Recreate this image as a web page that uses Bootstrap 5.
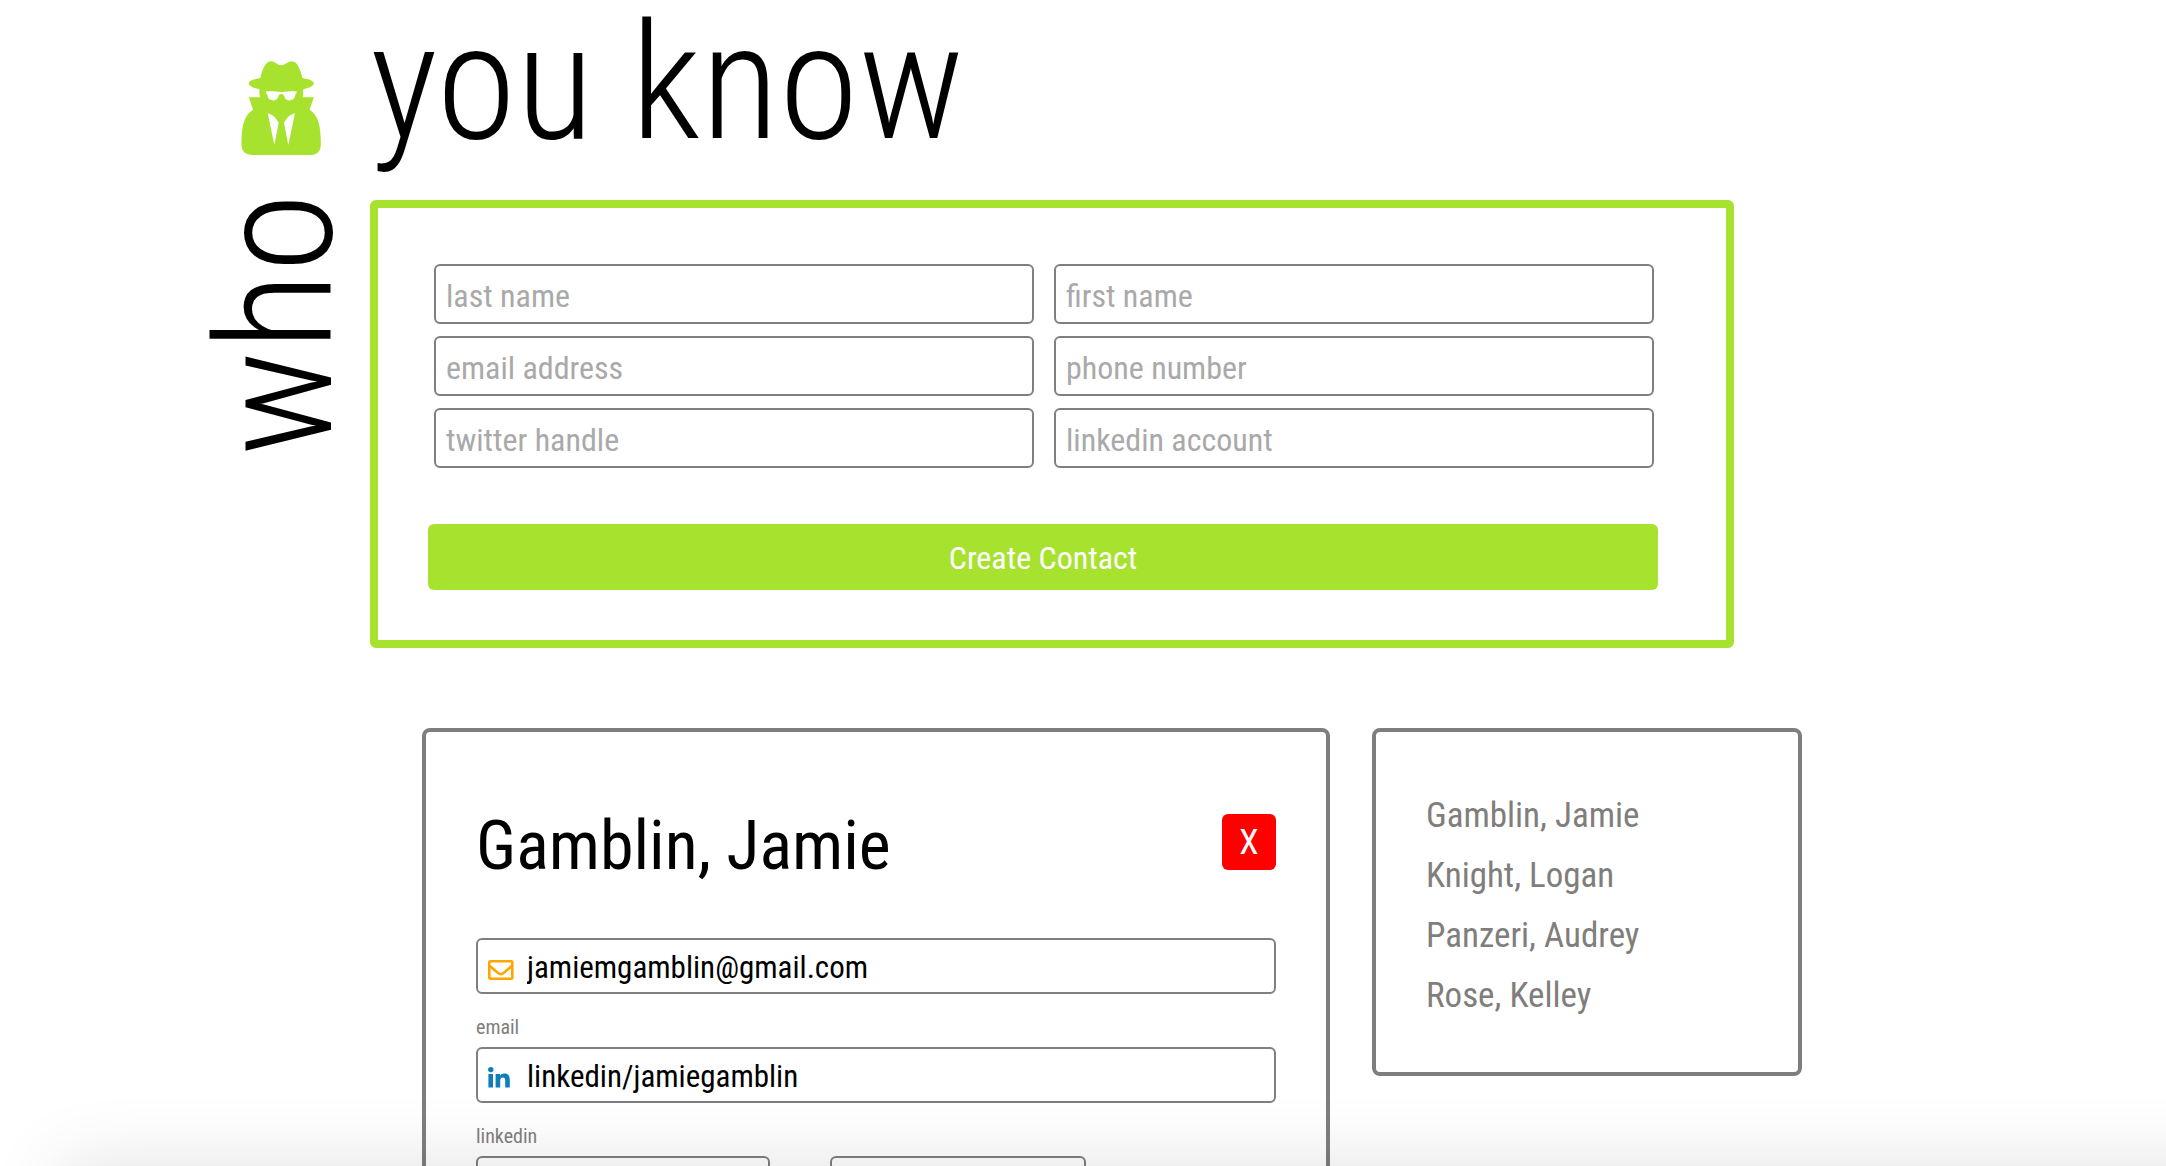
<!DOCTYPE html>
<html lang="en">
<head>
<meta charset="utf-8">
<meta name="viewport" content="width=device-width, initial-scale=1">
<title>who you know</title>
<link href="https://cdn.jsdelivr.net/npm/bootstrap@5.3.0/dist/css/bootstrap.min.css" rel="stylesheet">
<style>
  :root { --lime: #a6e22e; --stone: #7f7e7c; }
  body { font-family: "Roboto Condensed", "Liberation Sans", sans-serif; font-size: 32px; color: #000; background: #fff; }
  .page { padding: 0 364px 48px 213px; }
  .rail { width: 157px; padding: 61px 0 0; }
  .spy { width: 80px; height: 94px; margin-left: 28px; color: var(--lime); }
  .display-word { font-size: 162px; line-height: 166px; font-weight: 300; }
  .display-side { writing-mode: vertical-rl; transform: rotate(180deg); line-height: 126px; margin-top: 38px; }
  .create-box { border: 8px solid var(--lime); border-radius: 6px; padding: 56px 68px 50px 50px; margin: 34px 68px 80px 0; }
  .create-fields { display: grid; grid-template-columns: 1fr 1fr; gap: 12px 20px; padding: 0 4px 0 6px; margin-bottom: 56px; }
  .create-fields .form-control { height: 60px; padding: 4px 10px 0; }
  .form-control { font-size: 32px; line-height: 40px; border: 2px solid #7f7f7f; border-radius: 6px; color: #000; }
  .form-control::placeholder { color: #a9a9a9; }
  .btn-create { height: 66px; padding: 2px 0 0; font-size: 32px; line-height: 40px; color: #fff; background: var(--lime); border: 0; border-radius: 6px; }
  .btn-create:hover { color: #fff; background: #97d022; }
  .details { display: grid; grid-template-columns: 908fr 430fr; gap: 42px; padding-left: 52px; }
  .panel { border: 4px solid var(--stone); border-radius: 8px; min-width: 0; }
  .contact-panel { padding: 70px 50px 50px; }
  .list-panel { padding: 54px 50px 46px; }
  .contact-name { font-size: 68px; line-height: 72px; font-weight: 400; padding-top: 8px; }
  .contact-head { margin-bottom: 56px; }
  .btn-remove { width: 54px; height: 56px; padding: 2px 0 0; font-size: 35px; line-height: 40px; color: #fff; background: #f00; border: 0; border-radius: 6px; }
  .btn-remove:hover { color: #fff; background: #d00; }
  .field-box { display: flex; align-items: center; height: 56px; padding: 4px 0 0 10px; border: 2px solid #7f7f7f; border-radius: 6px; }
  .field-box svg { width: 26px; height: 26px; flex: none; margin-right: 13px; }
  .field-box input { flex: 1; min-width: 0; padding: 0; border: 0; background: transparent; color: #000; font-size: 31px; line-height: 40px; }
  .field-label { display: block; font-size: 20px; line-height: 26px; color: var(--stone); padding: 20px 0 7px; }
  .short-fields { gap: 7.5%; }
  .short-a { width: 36.75%; }
  .short-b { width: 32%; }
  .name-link { display: block; font-size: 35px; line-height: 60px; color: var(--stone); text-decoration: none; }
  .name-link:hover { color: #000; }
  .bottom-shade { position: fixed; top: 100%; left: 60px; right: -200px; height: 300px; box-shadow: 0 0 70px rgba(0,0,0,.12); pointer-events: none; }
</style>
</head>
<body>
<div class="page d-flex">
  <div class="rail flex-shrink-0">
    <svg class="spy d-block" viewBox="48 47 240 283" fill="currentColor" aria-hidden="true">
      <path fill-rule="evenodd" d="M138 48 C151 49 157 60 169 60 C181 60 187 49 200 48 C217 47 228 76 232 98 C252 101 267 107 267 114 C267 122 253 128 235 132 C235 141 235 148 233 156 L267 156 L254 194 C280 209 288 244 288 296 C288 320 276 330 254 330 L84 330 C61 330 49 319 49 296 C49 244 57 209 84 194 L71 156 L105 156 C103 148 103 141 103 132 C86 129 71 122 71 114 C71 107 86 101 106 98 C110 76 122 47 138 48 Z
      M122 139 C135 136 154 140 169 140 C184 140 203 136 216 139 L214 145 C211 147 211 150 210 154 C206 169 182 170 178 154 C176 148 175 146 169 146 C163 146 162 148 160 154 C156 170 132 169 128 154 C127 149 127 147 124 145 Z
      M128 204 L148 300 L161 233 C151 215 142 208 128 204 Z M210 204 L190 300 L177 233 C187 215 196 208 210 204 Z"/>
    </svg>
    <div class="display-word display-side">who</div>
  </div>

  <main class="flex-grow-1">
    <h1 class="display-word m-0 text-nowrap">you know</h1>

    <form class="create-box">
      <div class="create-fields">
        <input class="form-control" type="text" aria-label="last name" placeholder="last name">
        <input class="form-control" type="text" aria-label="first name" placeholder="first name">
        <input class="form-control" type="email" aria-label="email address" placeholder="email address">
        <input class="form-control" type="tel" aria-label="phone number" placeholder="phone number">
        <input class="form-control" type="text" aria-label="twitter handle" placeholder="twitter handle">
        <input class="form-control" type="text" aria-label="linkedin account" placeholder="linkedin account">
      </div>
      <button class="btn btn-create w-100" type="button">Create Contact</button>
    </form>

    <div class="details align-items-start">
      <section class="panel contact-panel">
        <div class="contact-head d-flex justify-content-between align-items-center">
          <h2 class="contact-name m-0">Gamblin, Jamie</h2>
          <button class="btn btn-remove" type="button">X</button>
        </div>
        <div class="field-box">
          <svg viewBox="0 0 26 26" fill="none" stroke="#ffa500" stroke-width="2.6" stroke-linejoin="round" aria-hidden="true"><rect x="1.3" y="6.3" width="23" height="17.4" rx="1.2"/><path d="M1.8 11 L10 18 Q12.8 20.2 15.6 18 L23.8 11"/></svg>
          <input id="email" type="text" value="jamiemgamblin@gmail.com" readonly>
        </div>
        <label class="field-label" for="email">email</label>
        <div class="field-box">
          <svg viewBox="0 0 26 26" fill="#0e7dbd" aria-hidden="true"><circle cx="2.8" cy="5.6" r="2.7"/><path d="M.4 9.9 H5 V23.6 H.4 Z M7.6 9.9 H12 V11.8 C13 10.2 14.5 9.5 16.3 9.5 C20.5 9.5 21.8 12.2 21.8 16 V23.6 H17.2 V16.8 C17.2 14.8 16.8 13.4 14.8 13.4 C12.8 13.4 12.2 14.9 12.2 16.7 V23.6 H7.6 Z"/></svg>
          <input id="linkedin" type="text" value="linkedin/jamiegamblin" readonly>
        </div>
        <label class="field-label" for="linkedin">linkedin</label>
        <div class="short-fields d-flex">
          <div class="field-box short-a"><input type="text" aria-label="twitter" readonly></div>
          <div class="field-box short-b"><input type="tel" aria-label="phone" readonly></div>
        </div>
      </section>

      <nav class="panel list-panel" aria-label="contacts">
        <a class="name-link" href="#">Gamblin, Jamie</a>
        <a class="name-link" href="#">Knight, Logan</a>
        <a class="name-link" href="#">Panzeri, Audrey</a>
        <a class="name-link" href="#">Rose, Kelley</a>
      </nav>
    </div>
  </main>
</div>
<div class="bottom-shade"></div>
<script src="https://cdn.jsdelivr.net/npm/bootstrap@5.3.0/dist/js/bootstrap.bundle.min.js"></script>
</body>
</html>
